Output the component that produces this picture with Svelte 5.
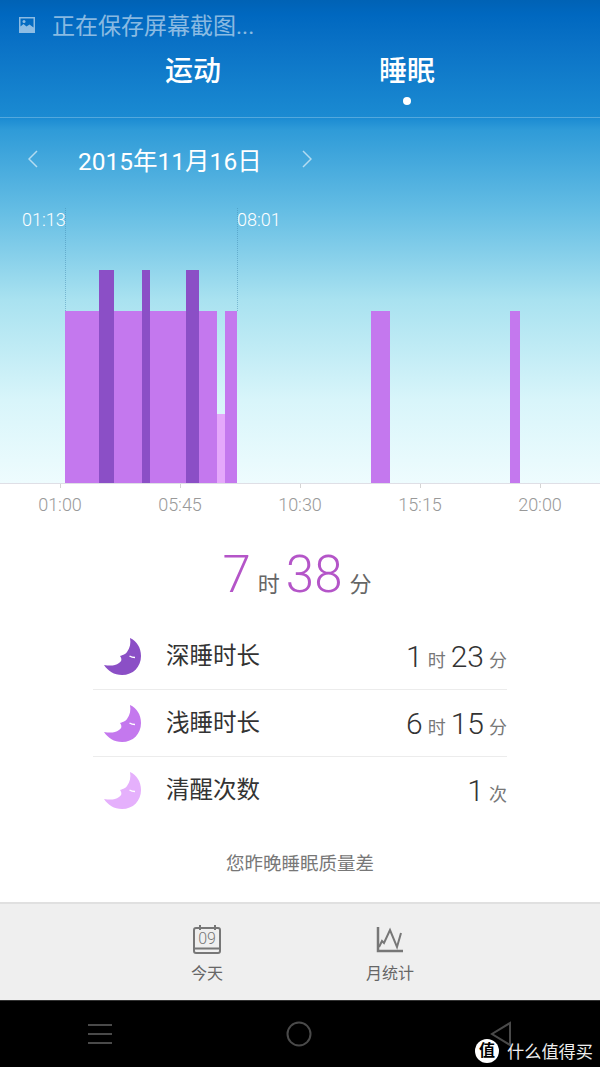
<script>
  const bars = [
    { x: 65, w: 152, h: 172, c: 'mid' },
    { x: 99, w: 15, h: 213, c: 'deep' },
    { x: 142, w: 8, h: 213, c: 'deep' },
    { x: 186, w: 13, h: 213, c: 'deep' },
    { x: 217, w: 8, h: 69, c: 'pale' },
    { x: 225, w: 12, h: 172, c: 'mid' },
    { x: 371, w: 19, h: 172, c: 'mid' },
    { x: 510, w: 10, h: 172, c: 'mid' }
  ];
  const ticks = ['01:00', '05:45', '10:30', '15:15', '20:00'];
  const rows = [
    { label: '深睡时长', color: '#8b4fc6', parts: [['1', '时'], ['23', '分']] },
    { label: '浅睡时长', color: '#c478ee', parts: [['6', '时'], ['15', '分']] },
    { label: '清醒次数', color: '#e5b0fc', parts: [['1', '次']] }
  ];
</script>

<div class="screen">
  <section class="sky">
    <header class="head">
      <div class="notice">
        <svg class="notice-icon" width="16" height="16" viewBox="0 0 16 16">
          <path fill="currentColor" fill-rule="evenodd" d="M0 0h16v16H0zM1.500 1.500v8l3-2.500 3 2.500 3-2 4 3v-9z" />
          <circle cx="5" cy="4.500" r="1.500" fill="currentColor" />
        </svg>
        <span>正在保存屏幕截图...</span>
      </div>
      <nav class="tabs">
        <span class="tab">运动</span>
        <span class="tab active">睡眠</span>
      </nav>
    </header>

    <div class="date">
      <svg width="10" height="18" viewBox="0 0 10 18"><path d="M9 1 1 9l8 8" /></svg>
      <span class="date-text">2015年11月16日</span>
      <svg width="10" height="18" viewBox="0 0 10 18"><path d="m1 1 8 8-8 8" /></svg>
    </div>

    <div class="chart">
      <span class="mark mark-start">01:13</span>
      <span class="mark mark-end">08:01</span>
      <i class="guide guide-start"></i>
      <i class="guide guide-end"></i>
      {#each bars as b}
        <i class="bar {b.c}" style="left:{b.x}px;width:{b.w}px;height:{b.h}px"></i>
      {/each}
    </div>
  </section>

  <div class="axis">
    {#each ticks as t}
      <span class="tick">{t}</span>
    {/each}
  </div>

  <main class="summary">
    <div class="total">
      <b>7</b><em>时</em><b>38</b><em>分</em>
    </div>

    <ul class="rows">
      {#each rows as r}
        <li class="row">
          <svg class="moon" width="38" height="37" viewBox="0 0 38 37">
            <path fill={r.color} d="M26 0C33 3 37 10 37 18 37 29 29 37 18 37 10 37 4 33 0 27 6 28 11 28 15 25 18 23 18 21 16 18 18 17 21 17 23 14 26 10 27 5 26 0Z" />
            <path d="M25.500 18c1.500 1 3 1.500 5.500 1.500" fill="none" stroke="#fff" stroke-width="1.300" />
          </svg>
          <span class="row-label">{r.label}</span>
          <span class="row-value">
            {#each r.parts as p}
              <b>{p[0]}</b><em>{p[1]}</em>
            {/each}
          </span>
        </li>
      {/each}
    </ul>

    <p class="verdict">您昨晚睡眠质量差</p>
  </main>

  <footer class="bottom">
    <div class="action">
      <svg width="30" height="30" viewBox="0 0 30 30" fill="none" stroke="#777" stroke-width="2">
        <rect x="2" y="3" width="26" height="25" rx="2" />
        <path d="M2 23.500h26M8 0v5M23 0v5" />
        <text x="15" y="19" text-anchor="middle" class="cal">09</text>
      </svg>
      <span>今天</span>
    </div>
    <div class="action">
      <svg width="30" height="30" viewBox="0 0 30 30" fill="none" stroke="#777">
        <path stroke-width="2.500" d="M3 2v24h25" />
        <path stroke-width="2" d="m4 22 3-6 2 2 6-13 7 17 4-14" />
      </svg>
      <span>月统计</span>
    </div>
  </footer>

  <div class="nav">
    <svg width="26" height="22" viewBox="0 0 26 22" stroke="#4a4a4a" stroke-width="2">
      <path d="M1 2h24M1 11h24M1 20h24" />
    </svg>
    <svg class="home" width="26" height="26" viewBox="0 0 26 26" fill="none" stroke="#4a4a4a" stroke-width="2">
      <circle cx="13" cy="13" r="11.500" />
    </svg>
    <svg width="22" height="26" viewBox="0 0 22 26" fill="none" stroke="#4a4a4a" stroke-width="2">
      <path d="M20 2v22L2 13z" />
    </svg>
    <div class="stamp">
      <span class="stamp-mark">值</span>
      <span>什么值得买</span>
    </div>
  </div>
</div>

<style>
  :global(body) {
    margin: 0;
    background: #fff;
  }

  .screen {
    position: relative;
    width: 600px;
    height: 1067px;
    overflow: hidden;
    display: flex;
    flex-direction: column;
    font-family: Roboto, "Noto Sans CJK SC", sans-serif;
    color: #333;
  }

  .sky {
    height: 483px;
    flex: none;
    background: linear-gradient(180deg, #0062b5 0, #0068c0 15px, #0a72c6 45px, #1b8bd2 118px, #2f9bd8 130px, #64bde4 210px, #a9e2f0 300px, #d8f5fa 400px, #eefcfe 483px);
    color: #fff;
  }

  .head {
    height: 118px;
    box-sizing: border-box;
    border-bottom: 1px solid rgba(255, 255, 255, 0.25);
  }

  .notice {
    height: 49px;
    padding-left: 19px;
    display: flex;
    align-items: center;
    gap: 17px;
    font-size: 23px;
    color: rgba(255, 255, 255, 0.55);
  }

  .notice span {
    position: relative;
    top: -1px;
  }

  .notice-icon { flex: none; }

  .tabs {
    display: flex;
    padding-left: 165px;
    gap: 158px;
    margin-top: 1px;
  }

  .tab {
    position: relative;
    font-size: 28px;
    line-height: 44px;
    font-weight: 500;
  }

  .active::after {
    content: '';
    position: absolute;
    left: 24px;
    top: 47px;
    width: 8px;
    height: 8px;
    border-radius: 50%;
    background: #fff;
  }

  .date {
    height: 82px;
    display: flex;
    align-items: center;
    padding-left: 28px;
    gap: 40px;
  }

  .date svg {
    fill: none;
    stroke: rgba(255, 255, 255, 0.6);
    stroke-width: 1.500;
    flex: none;
  }

  .date-text {
    font-size: 24.500px;
  }

  .chart {
    position: relative;
    height: 283px;
  }

  .mark {
    position: absolute;
    top: 9px;
    font-size: 18px;
    font-weight: 300;
    line-height: 22px;
  }
  .mark-start { left: 22px; }
  .mark-end { left: 237px; }

  .guide {
    position: absolute;
    top: 8px;
    bottom: 172px;
    border-left: 1px dotted rgba(60, 130, 170, 0.45);
  }
  .guide-start { left: 65px; }
  .guide-end { left: 237px; }

  .bar {
    position: absolute;
    bottom: 0;
  }
  .mid { background: #c478ee; }
  .deep { background: #8b4fc6; }
  .pale { background: #e5a8fb; }

  .axis {
    flex: none;
    height: 46px;
    box-sizing: border-box;
    border-top: 1px solid #dfdfe6;
    display: flex;
    justify-content: space-between;
    padding: 0 35px;
    font-size: 18px;
    font-weight: 300;
    color: #999;
  }

  .tick {
    position: relative;
    width: 50px;
    text-align: center;
    line-height: 42px;
  }

  .tick::before {
    content: '';
    position: absolute;
    top: 0;
    left: 25px;
    height: 4px;
    border-left: 1px solid #d5d5d5;
  }

  .summary {
    flex: 1;
    display: flex;
    flex-direction: column;
    align-items: center;
    background: #fff;
  }

  .total {
    height: 94px;
    display: flex;
    align-items: baseline;
    justify-content: center;
    line-height: 92px;
  }

  .total b {
    font-size: 51px;
    font-weight: 300;
    color: #b455c8;
  }

  .total em {
    font-style: normal;
    font-size: 22px;
    color: #666;
    margin: 0 6px 0 7px;
  }

  .rows {
    list-style: none;
    margin: 0;
    padding: 0;
    width: 414px;
  }

  .row {
    height: 66px;
    display: flex;
    align-items: center;
    border-bottom: 1px solid #ececec;
    padding: 0 0 0 11px;
  }

  .row:last-child { border-bottom: none; }

  .moon {
    flex: none;
    margin-right: 25px;
  }

  .row-label {
    font-size: 23.500px;
    color: #333;
    margin: 0 0 4px -1px;
  }

  .row-value {
    margin-left: auto;
    display: flex;
    align-items: baseline;
  }

  .row-value b {
    font-size: 30px;
    font-weight: 300;
    color: #333;
  }

  .row-value em {
    font-style: normal;
    font-size: 18px;
    color: #777;
    margin-left: 5px;
    margin-right: 5px;
  }
  .row-value em:last-child { margin-right: 0; }

  .verdict {
    margin: 26px 0 0;
    font-size: 18.500px;
    color: #777;
  }

  .bottom {
    flex: none;
    height: 98px;
    box-sizing: border-box;
    border-top: 2px solid #e0e0e0;
    background: #efefef;
    display: flex;
    padding: 21px 0 0 182px;
    gap: 133px;
  }

  .action {
    width: 50px;
    display: flex;
    flex-direction: column;
    align-items: center;
    gap: 5px;
    font-size: 16px;
    color: #666;
    white-space: nowrap;
  }

  .cal {
    font-family: Roboto, sans-serif;
    font-size: 16px;
    font-weight: 300;
    fill: #777;
    stroke: none;
  }

  .nav {
    position: relative;
    flex: none;
    height: 67px;
    box-sizing: border-box;
    border-top: 1px solid #333;
    background: #000;
    display: flex;
    align-items: center;
    justify-content: space-between;
    padding: 0 88px 0 87px;
  }

  .home { margin-left: -5px; }

  .stamp {
    position: absolute;
    right: 7px;
    bottom: 4px;
    display: flex;
    align-items: center;
    gap: 8px;
    font-size: 17.200px;
    color: #eee;
  }

  .stamp-mark {
    width: 24px;
    height: 24px;
    border-radius: 50%;
    background: #fff;
    color: #000;
    font-size: 16px;
    font-weight: 700;
    line-height: 24px;
    text-align: center;
  }
</style>
